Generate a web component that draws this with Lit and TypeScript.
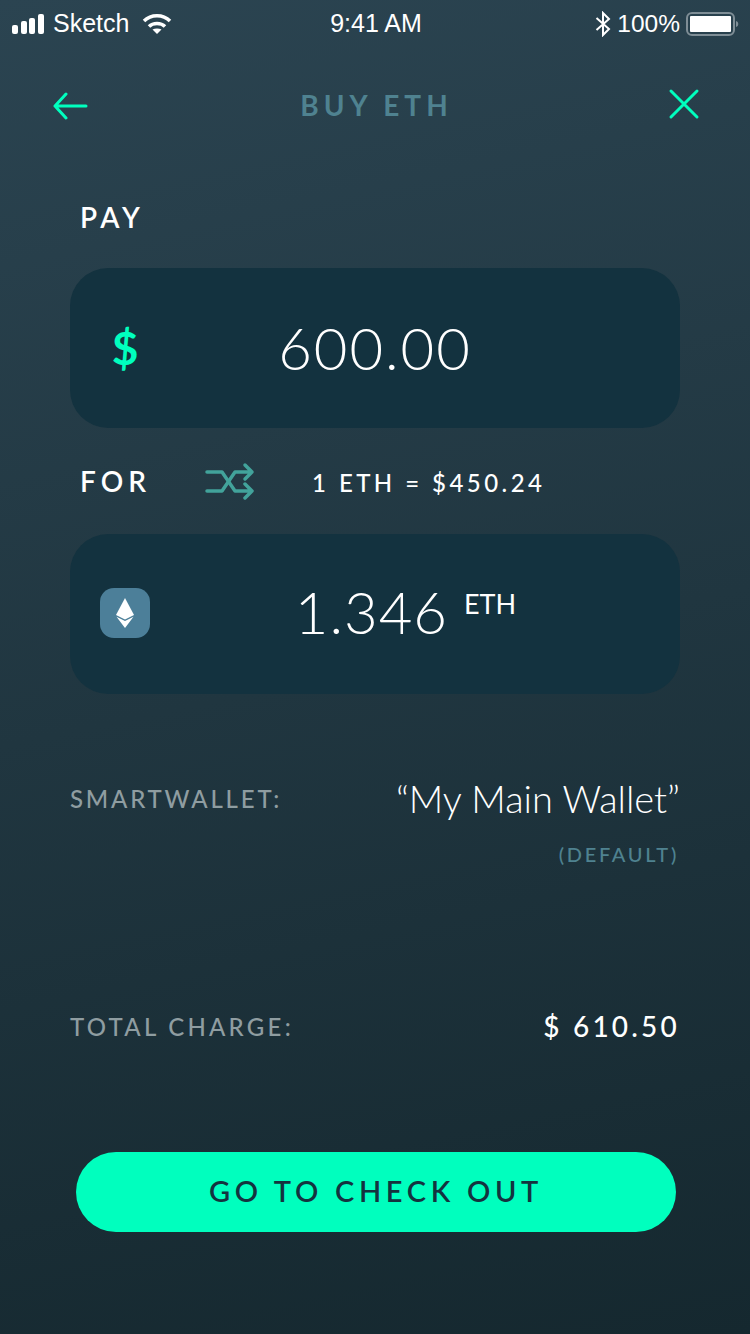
import { LitElement, html, css } from "lit";
import { customElement } from "lit/decorators.js";

@customElement("app-root")
export class AppRoot extends LitElement {
  static styles = css`
    :host { display: block; width: 750px; height: 1334px; overflow: hidden; font-family: "Lato", sans-serif; color: #fff; }
    .page { width: 750px; height: 1334px; background: linear-gradient(168deg, #2b4451 0%, #15282f 100%); display: flex; flex-direction: column; }
    .status { height: 47px; display: grid; grid-template-columns: 1fr auto 1fr; align-items: center; padding: 0 10px 0 12px; font-family: "Liberation Sans", sans-serif; font-size: 25px; box-sizing: border-box; }
    .st-left { display: flex; align-items: center; gap: 9px; }
    .st-right { display: flex; align-items: center; justify-content: flex-end; gap: 6px; font-size: 24.5px; }
    .wifi { margin-left: 4px; }
    .nav { height: 116px; display: flex; align-items: center; justify-content: space-between; padding: 0 50px 0 52px; box-sizing: border-box; }
    .nav-back { margin-top: 2px; }
    .nav-close { margin-bottom: 2px; }
    .nav-title { font-size: 28px; font-weight: 700; letter-spacing: 5px; color: #4f8290; margin-right: 3px; }
    .label { font-size: 28px; font-weight: 600; letter-spacing: 4.6px; padding-left: 80px; }
    .pay { height: 54px; display: flex; align-items: center; margin-top: 27px; margin-bottom: 24px; }
    .field { margin: 0 70px; height: 160px; border-radius: 38px; background: #13323f; display: grid; grid-template-columns: 110px 1fr 110px; align-items: center; }
    .field-icon { display: flex; justify-content: center; margin-top: -2px; }
    .dollar { font-size: 46px; font-weight: 700; color: #00ffbe; }
    .amount { text-align: center; font-size: 58px; font-weight: 300; letter-spacing: 2px; margin-top: -2px; }
    .eth-amt { display: flex; justify-content: center; align-items: flex-start; gap: 16px; padding-left: 61px; margin-top: -6px; letter-spacing: 1px; }
    .eth-unit { font-size: 27px; font-weight: 400; letter-spacing: 0; margin-top: 10px; }
    .for-row { height: 106px; display: flex; align-items: center; padding-left: 80px; }
    .for-row .label { padding: 0; width: 125px; letter-spacing: 5px; }
    .rate { font-size: 24px; font-weight: 500; letter-spacing: 3.45px; margin: 2px 0 0 57px; }
    .eth-badge { width: 50px; height: 50px; border-radius: 14px; background: #4c7f99; display: flex; align-items: center; justify-content: center; margin: -2px 0 0 30px; }
    .row { margin: 0 70px; display: flex; justify-content: space-between; align-items: center; }
    .row-label { font-size: 24px; font-weight: 500; color: #8f9da1; }
    .sw { letter-spacing: 2.8px; }
    .tc { letter-spacing: 3.25px; }
    .wallet { margin-top: 74px; height: 60px; }
    .wallet-name { font-size: 38px; font-weight: 300; }
    .default { margin: 14px 71px 0 0; text-align: right; font-size: 20px; font-weight: 500; letter-spacing: 2.7px; color: #4f8290; }
    .total { margin-top: 130px; height: 60px; }
    .total-val { font-size: 28px; font-weight: 500; letter-spacing: 3.2px; }
    .cta { margin: 96px 74px 0 76px; height: 80px; box-sizing: border-box; padding-bottom: 3px; border-radius: 40px; background: #00ffbe; color: #14333f; font-size: 29px; font-weight: 600; letter-spacing: 4.7px; display: flex; align-items: center; justify-content: center; }
  `;

  render() {
    return html`<div class="page">
      <div class="status">
        <div class="st-left">
          <svg width="32" height="20" viewBox="0 0 32 20" fill="#fff">
            <rect x="0" y="11" width="6" height="9" rx="2"/><rect x="9" y="7" width="6" height="13" rx="2"/><rect x="17" y="4" width="6" height="16" rx="2"/><rect x="26" y="0" width="6" height="20" rx="2"/>
          </svg>
          <span>Sketch</span>
          <svg class="wifi" width="30" height="22" viewBox="0 0 30 22" fill="none" stroke="#fff" stroke-width="3.500">
            <path d="M2 8 C9 1 21 1 28 8"/><path d="M7 13.500 C11 9.500 19 9.500 23 13.500"/><path d="M15 21 L10.500 16.500 C13 15 17 15 19.500 16.500 Z" fill="#fff" stroke="none"/>
          </svg>
        </div>
        <div>9:41 AM</div>
        <div class="st-right">
          <svg width="16" height="26" viewBox="0 0 16 26" fill="none" stroke="#fff" stroke-width="2">
            <path d="M1.500 7 L14 18 L8 24 V2 L14 8 L1.500 19"/>
          </svg>
          <span>100%</span>
          <svg width="54" height="24" viewBox="0 0 54 24" fill="none">
            <rect x="1" y="1" width="47" height="22" rx="5" stroke="#7f8e96" stroke-width="2"/>
            <rect x="4" y="4" width="41" height="16" rx="1" fill="#fff"/>
            <path d="M50 9 C53 9.500 53 14.500 50 15 Z" fill="#7f8e96"/>
          </svg>
        </div>
      </div>

      <div class="nav">
        <svg class="nav-back" width="36" height="28" viewBox="0 0 36 28" fill="none" stroke="#00ffbe" stroke-width="3" stroke-linecap="round" stroke-linejoin="round">
          <path d="M34 14 H3 M14 2 L3 14 L14 26"/>
        </svg>
        <div class="nav-title">BUY ETH</div>
        <svg class="nav-close" width="32" height="32" viewBox="0 0 32 32" fill="none" stroke="#00ffbe" stroke-width="3" stroke-linecap="round">
          <path d="M3 3 L29 29 M29 3 L3 29"/>
        </svg>
      </div>

      <div class="pay label">PAY</div>

      <div class="field">
        <div class="field-icon"><span class="dollar">$</span></div>
        <div class="amount">600.00</div>
      </div>

      <div class="for-row">
        <div class="label">FOR</div>
        <svg width="50" height="38" viewBox="0 0 50 38" fill="none" stroke="#42a39b" stroke-width="3.500" stroke-linecap="round" stroke-linejoin="round">
          <path d="M2 10 H17 L30 29 H47 M40 22 L47 29 L40 36"/><path d="M2 29 H17 L30 10 H47 M40 3 L47 10 L40 17"/>
        </svg>
        <div class="rate">1 ETH = $450.24</div>
      </div>

      <div class="field">
        <div class="eth-badge">
          <svg width="18" height="30" viewBox="0 0 18 30" fill="#fff">
            <path d="M9 0 L18 17 L9 21.500 L0 17 Z"/><path d="M0.500 18.800 L9 23 L17.500 18.800 L9 30 Z"/>
          </svg>
        </div>
        <div class="amount eth-amt"><span>1.346</span><span class="eth-unit">ETH</span></div>
      </div>

      <div class="row wallet">
        <div class="row-label sw">SMARTWALLET:</div>
        <div class="wallet-name">“My Main Wallet”</div>
      </div>
      <div class="default">(DEFAULT)</div>

      <div class="row total">
        <div class="row-label tc">TOTAL CHARGE:</div>
        <div class="total-val">$ 610.50</div>
      </div>

      <div class="cta">GO TO CHECK OUT</div>
    </div>`;
  }
}
